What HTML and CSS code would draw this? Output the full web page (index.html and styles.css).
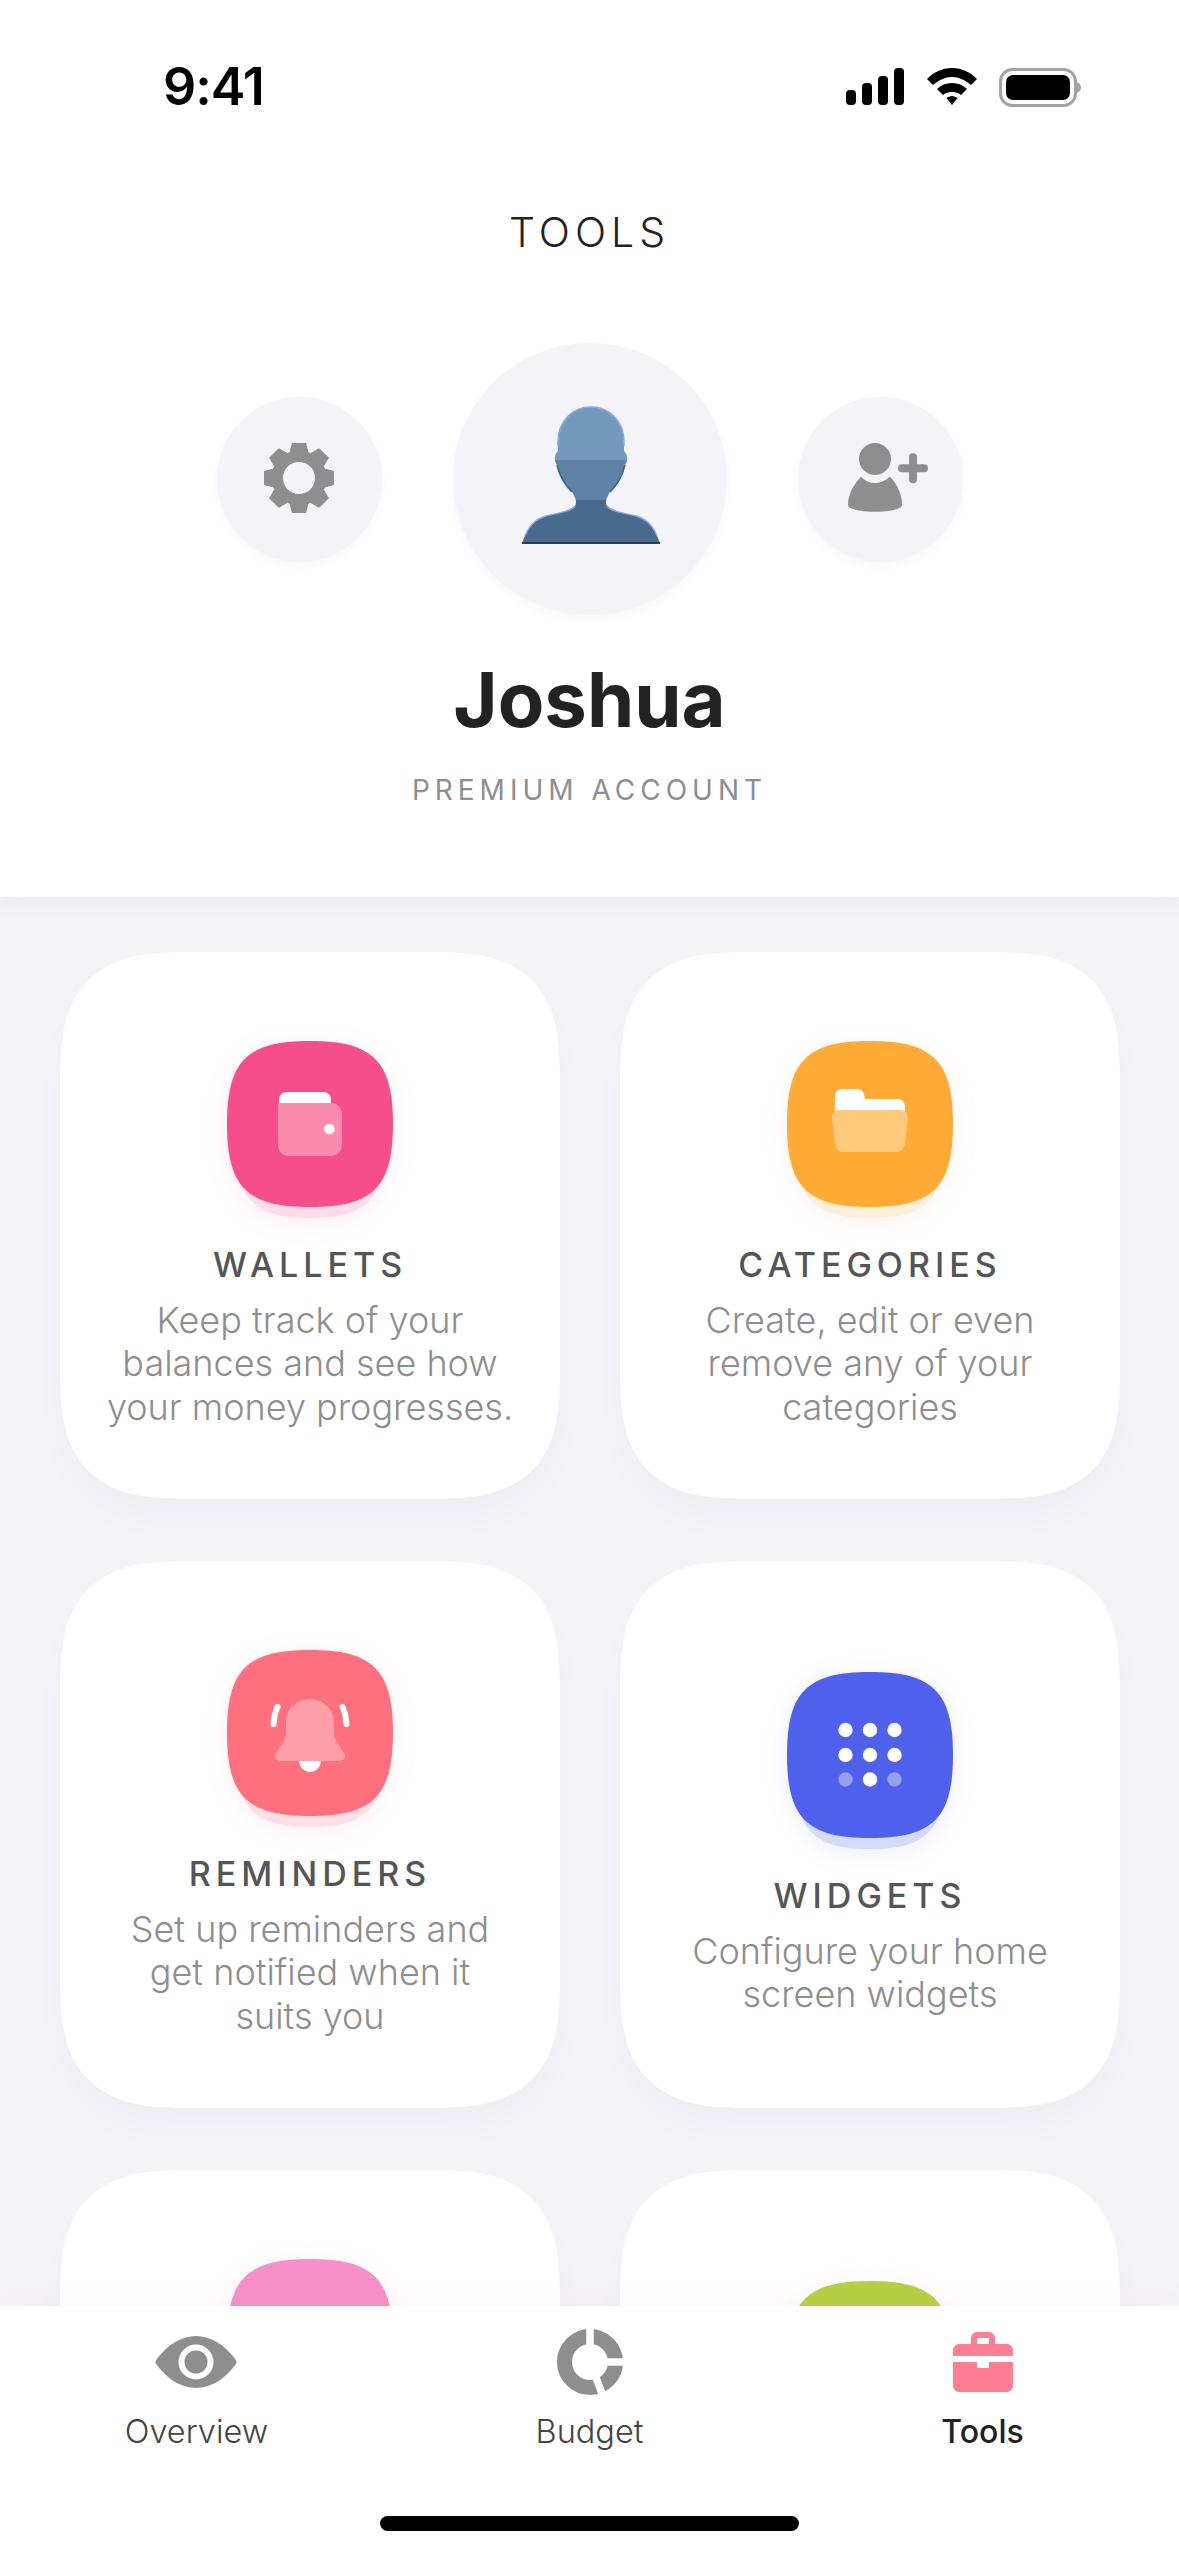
FILE: index.html
```html
<!DOCTYPE html>
<html lang="en">
<head>
	<meta charset="UTF-8">
	<meta name="viewport" content="width=device-width, initial-scale=1.0">
	<title>Tools</title>
	<link rel="stylesheet" href="styles.css">
</head>
<body>
	<svg class="defs" width="0" height="0" aria-hidden="true">
		<defs>
			<path id="sq" d="M83 0C146 0 166 20 166 83C166 146 146 166 83 166C20 166 0 146 0 83C0 20 20 0 83 0Z"/>
			<linearGradient id="bust" gradientUnits="userSpaceOnUse" x1="0" y1="0" x2="0" y2="138">
				<stop offset="0.39" stop-color="#7399bb"/>
				<stop offset="0.39" stop-color="#5e82a6"/>
				<stop offset="0.68" stop-color="#5e82a6"/>
				<stop offset="0.68" stop-color="#486a8d"/>
			</linearGradient>
		</defs>
	</svg>

	<div class="header">
		<div class="status">
			<span class="clock">9:41</span>
			<div class="status-icons">
				<svg class="signal" width="59" height="38" viewBox="0 0 59 38">
					<rect x="1" y="22" width="10" height="15" rx="4"/>
					<rect x="17" y="15" width="10" height="22" rx="4"/>
					<rect x="33" y="8" width="10" height="29" rx="4"/>
					<rect x="49" y="0" width="10" height="37" rx="4"/>
				</svg>
				<svg class="wifi" width="50" height="37" viewBox="0 0 50 37">
					<path d="M0 11C7 4 15 0 25 0C35 0 43 4 50 11L44 17C38 12 32 9 25 9C18 9 12 12 6 17Z"/>
					<path d="M10 21C14 17 19 15 25 15C31 15 36 17 40 21L34 27C32 25 29 24 25 24C21 24 18 25 16 27Z"/>
					<path d="M19.500 30C21 29 23 28 25 28C27 28 29 29 30.500 30L25 37Z"/>
				</svg>
				<svg class="battery" width="82" height="39" viewBox="0 0 82 39">
					<rect x="1.500" y="1.500" width="75" height="36" rx="12" class="battery-rim"/>
					<rect x="7" y="7" width="64" height="25" rx="7"/>
					<path d="M78 14C80.500 15 82 17 82 19.500C82 22 80.500 24 78 25Z" class="battery-nub"/>
				</svg>
			</div>
		</div>

		<div class="title">TOOLS</div>

		<div class="actions">
			<div class="round">
				<svg width="70" height="70" viewBox="-35 -35 70 70" class="grey-icon gear">
					<path fill-rule="evenodd" stroke="#8e8e8e" stroke-width="1" stroke-linejoin="round" d="M-9 -25.500L-6.500 -35H6.500L9 -25.500L11.670 -24.400L20.150 -29.350L29.350 -20.150L24.400 -11.670L25.500 -9L35 -6.500V6.500L25.500 9L24.400 11.670L29.350 20.150L20.150 29.350L11.670 24.400L9 25.500L6.500 35H-6.500L-9 25.500L-11.670 24.400L-20.150 29.350L-29.350 20.150L-24.400 11.670L-25.500 9L-35 6.500V-6.500L-25.500 -9L-24.400 -11.670L-29.350 -20.150L-20.150 -29.350L-11.670 -24.400ZM16.500 0A16.500 16.500 0 1 0 -16.500 0A16.500 16.500 0 1 0 16.500 0Z"/>
				</svg>
			</div>
			<div class="round round-big">
				<svg width="138" height="138" viewBox="0 0 138 138" class="bust">
					<path fill="url(#bust)" d="M69 1C87 1 102 15 102 36V45C106 48 106 55 103 59C100 72 95 79 88 86C84 92 83 97 85 100C89 106 103 107 114 110C127 114 134 124 138 138H0C4 124 11 114 24 110C35 107 49 106 53 100C55 97 54 92 50 86C43 79 38 72 35 59C32 55 32 48 36 45V36C36 15 51 1 69 1Z"/>
					<path class="bust-edge" d="M36 40V36C36 15 51 1 69 1C87 1 102 15 102 36V40"/>
					<path class="bust-edge" d="M85 100C89 106 103 107 114 110C125 113 131 120 135 130"/>
					<path class="bust-edge" d="M53 100C49 106 35 107 24 110C13 113 7 120 3 130"/>
					<path class="bust-neck" d="M103 59C100 72 95 79 88 86M35 59C38 72 43 79 50 86"/>
					<path class="bust-base" d="M0 137H138"/>
				</svg>
			</div>
			<div class="round">
				<svg width="80" height="69" viewBox="0 0 80 69" class="grey-icon add-user">
					<circle cx="27" cy="16" r="16"/>
					<path d="M13 33.700C17 38 22 40 27 40C32 40 37 38 42 33.700C50 42 54 52 54 62C54 66 42 68.700 27 68.700C12 68.700 0 66 0 62C0 52 5 42 13 33.700Z"/>
					<path d="M54 25.300H76M65 14.300V36.300" class="plus"/>
				</svg>
			</div>
		</div>

		<div class="name">Joshua</div>
		<div class="plan">PREMIUM ACCOUNT</div>
	</div>

	<div class="cards">
		<div class="card">
			<svg class="tile tile-pink" viewBox="0 0 166 166">
				<use class="tile-under" href="#sq" transform="translate(7 11) scale(.916 1)"/>
				<use class="tile-top" href="#sq"/>
				<path fill="#fff" d="M52 62V59C52 54 55 51 60 51H96C101 51 104 54 104 59V62Z"/>
				<rect x="51" y="62" width="64" height="53" rx="11" fill="#f98cae"/>
				<path fill="#f98cae" d="M51 62H70V75H51Z"/>
				<circle cx="102.500" cy="88" r="5.300" fill="#fff"/>
			</svg>
			<div class="card-name">WALLETS</div>
			<p class="card-text">Keep track of your<br>balances and see how<br>your money progresses.</p>
		</div>

		<div class="card">
			<svg class="tile tile-orange" viewBox="0 0 166 166">
				<use class="tile-under" href="#sq" transform="translate(7 11) scale(.916 1)"/>
				<use class="tile-top" href="#sq"/>
				<path fill="#fff" d="M48 75V55C48 51 51 48 55 48H70C75 48 77 51 78 58H111C115 58 118 61 118 66V75Z"/>
				<path fill="#ffc97c" d="M53 69H113C118 69 121 72 121 77L118 103C117 108 114 111 110 111H56C52 111 49 108 48 103L45 77C45 72 48 69 53 69Z"/>
			</svg>
			<div class="card-name">CATEGORIES</div>
			<p class="card-text">Create, edit or even<br>remove any of your<br>categories</p>
		</div>

		<div class="card">
			<svg class="tile tile-red" viewBox="0 0 166 166">
				<use class="tile-under" href="#sq" transform="translate(7 11) scale(.916 1)"/>
				<use class="tile-top" href="#sq"/>
				<path fill="#fff" d="M72 110H94C94 117 89 122 83 122C77 122 72 117 72 110Z"/>
				<path fill="#ff9da8" d="M83 49C96 49 107 59 107 72V83C107 90 112 95 117 103C120 107 117 111 111 111H55C49 111 46 107 49 103C54 95 59 90 59 83V72C59 59 70 49 83 49Z"/>
				<path class="bell-tick" d="M50.500 57C48 62 47 68 46.500 74M115.500 57C118 62 119 68 119.500 74"/>
			</svg>
			<div class="card-name">REMINDERS</div>
			<p class="card-text">Set up reminders and<br>get notified when it<br>suits you</p>
		</div>

		<div class="card">
			<svg class="tile tile-blue" viewBox="0 0 166 166">
				<use class="tile-under" href="#sq" transform="translate(7 11) scale(.916 1)"/>
				<use class="tile-top" href="#sq"/>
				<g fill="#fff">
					<circle cx="58.500" cy="58" r="7.200"/><circle cx="83" cy="58" r="7.200"/><circle cx="107.500" cy="58" r="7.200"/>
					<circle cx="58.500" cy="83" r="7.200"/><circle cx="83" cy="83" r="7.200"/><circle cx="107.500" cy="83" r="7.200"/>
					<circle cx="83" cy="107.500" r="7.200"/>
				</g>
				<circle cx="58.500" cy="107.500" r="7.200" fill="#95a1ee"/>
				<circle cx="107.500" cy="107.500" r="7.200" fill="#95a1ee"/>
			</svg>
			<div class="card-name">WIDGETS</div>
			<p class="card-text">Configure your home<br>screen widgets</p>
		</div>

		<div class="card card-cut">
			<svg class="tile tile-rose" viewBox="0 0 166 166">
				<use class="tile-top" href="#sq"/>
			</svg>
		</div>

		<div class="card card-cut card-cut-low">
			<svg class="tile tile-green" viewBox="0 0 166 166">
				<use class="tile-top" href="#sq"/>
			</svg>
		</div>
	</div>

	<div class="tabbar">
		<div class="tabs">
			<div class="tab">
				<div class="tab-icon">
					<svg width="82" height="52" viewBox="0 0 82 52" class="eye">
						<path fill="#8e8e8e" d="M1 24C12 9 26 0 41 0C56 0 70 9 81 24Q82 26 81 28C70 43 56 52 41 52C26 52 12 43 1 28Q0 26 1 24Z"/>
						<circle cx="41" cy="26" r="14.500" fill="#8e8e8e" stroke="#fff" stroke-width="6"/>
					</svg>
				</div>
				<span>Overview</span>
			</div>
			<div class="tab">
				<div class="tab-icon">
					<svg width="66" height="66" viewBox="0 0 66 66">
						<circle cx="33" cy="33" r="25.500" fill="none" stroke="#8e8e8e" stroke-width="15"/>
						<path class="donut-cut" d="M33 33V-2M33 33H68M33 33L45.500 65.700"/>
					</svg>
				</div>
				<span>Budget</span>
			</div>
			<div class="tab tab-active">
				<div class="tab-icon">
					<svg width="60" height="60" viewBox="0 0 60 60">
						<path fill="#ff7e93" fill-rule="evenodd" d="M6 12H18V6A6 6 0 0 1 24 0H36A6 6 0 0 1 42 6V12H54A6 6 0 0 1 60 18V24H0V18A6 6 0 0 1 6 12ZM24 6V12H36V6Z"/>
						<path fill="#ff7e93" d="M0 30H24V36H36V30H60V54A6 6 0 0 1 54 60H6A6 6 0 0 1 0 54Z"/>
					</svg>
				</div>
				<span>Tools</span>
			</div>
		</div>
		<div class="home-bar"></div>
	</div>
</body>
</html>
```

FILE: styles.css
```css
* {
	box-sizing: border-box;
}
html, body {
	margin: 0;
	height: 100%;
}
body {
	width: 1179px;
	height: 2556px;
	overflow: hidden;
	background-color: #f3f3f8;
	font-family: Inter, "Liberation Sans", sans-serif;
}
.defs {
	position: absolute;
}

/* top part */
.header {
	position: relative;
	height: 897px;
	background-color: white;
	box-shadow: 0 4px 24px rgba(40, 40, 70, 0.05);
	text-align: center;
}
.status {
	display: flex;
	justify-content: space-between;
	height: 107px;
	padding: 67px 98px 0 163px;
}
.clock {
	font-size: 52px;
	line-height: 40px;
	font-weight: 600;
	letter-spacing: -1px;
	color: black;
}
.status-icons {
	display: flex;
	align-items: flex-start;
	gap: 22px;
	margin-top: 1px;
}
.signal {
	margin-right: 1px;
}
.battery-rim {
	fill: none;
	stroke: #a3a3a3;
	stroke-width: 3;
}
.battery-nub {
	fill: #a3a3a3;
}
.title {
	margin-top: 105px;
	font-size: 41px;
	line-height: 40px;
	font-weight: 300;
	letter-spacing: 5px;
	color: #222;
}
.actions {
	display: flex;
	justify-content: center;
	align-items: center;
	gap: 71px;
	height: 272px;
	margin-top: 91px;
}
.round {
	display: flex;
	justify-content: center;
	align-items: center;
	width: 165px;
	height: 165px;
	border-radius: 50%;
	background-color: #f3f3f8;
	box-shadow: 0 4px 8px rgba(40, 40, 70, 0.04);
}
.round-big {
	width: 274px;
	height: 272px;
}
.grey-icon {
	fill: #8e8e8e;
}
.gear {
	margin-bottom: 3px;
}
.add-user {
	margin: 0 0 3px 16px;
}
.bust {
	margin: 0 0 8px 3px;
}
.plus {
	fill: none;
	stroke: #8e8e8e;
	stroke-width: 8;
	stroke-linecap: round;
}
.bust-edge {
	fill: none;
	stroke: #8ea5e6;
	stroke-width: 1.5;
}
.bust-neck {
	fill: none;
	stroke: #3f6488;
	stroke-width: 1.5;
}
.bust-base {
	fill: none;
	stroke: #2c3d55;
	stroke-width: 2;
}
.name {
	margin-top: 39px;
	font-size: 76px;
	line-height: 90px;
	font-weight: 700;
	color: #222;
}
.plan {
	margin-top: 26px;
	font-size: 28px;
	line-height: 40px;
	letter-spacing: 5px;
	color: #8e8e8e;
}

/* cards */
.cards {
	display: grid;
	grid-template-columns: 500px 500px;
	grid-auto-rows: 547px;
	column-gap: 60px;
	row-gap: 62px;
	height: 1409px;
	padding: 55px 0 0 60px;
	overflow: hidden;
}
.card {
	display: flex;
	flex-direction: column;
	align-items: center;
	justify-content: center;
	padding-top: 19px;
	background-color: white;
	border-radius: 130px;
	corner-shape: superellipse(1.5);
	box-shadow: 0 22px 32px rgba(40, 40, 70, 0.025);
	text-align: center;
}
.card-cut {
	justify-content: flex-start;
	padding-top: 89px;
}
.card-cut-low {
	padding-top: 111px;
}
.tile {
	flex: none;
	width: 166px;
	height: 166px;
	overflow: visible;
}
.tile-pink {
	filter: drop-shadow(0 4px 12px rgba(245, 80, 130, 0.1));
}
.tile-pink .tile-top {
	fill: #f54e8a;
}
.tile-pink .tile-under {
	fill: #ffdde6;
}
.tile-orange {
	filter: drop-shadow(0 4px 12px rgba(245, 110, 110, 0.09));
}
.tile-orange .tile-top {
	fill: #ffab36;
}
.tile-orange .tile-under {
	fill: #ffeed8;
}
.tile-red {
	filter: drop-shadow(0 4px 12px rgba(255, 100, 110, 0.09));
}
.tile-red .tile-top {
	fill: #ff707e;
}
.tile-red .tile-under {
	fill: #ffdfe6;
}
.tile-blue {
	filter: drop-shadow(0 4px 12px rgba(70, 80, 200, 0.1));
}
.tile-blue .tile-top {
	fill: #4f60ed;
}
.tile-blue .tile-under {
	fill: #d4daf9;
}
.tile-rose {
	filter: drop-shadow(0 0 12px rgba(245, 110, 130, 0.07));
}
.tile-rose .tile-top {
	fill: #f78fcb;
}
.tile-green {
	filter: drop-shadow(0 0 12px rgba(245, 130, 110, 0.07));
}
.tile-green .tile-top {
	fill: #b3d13f;
}
.bell-tick {
	fill: none;
	stroke: white;
	stroke-width: 6;
	stroke-linecap: round;
}
.card-name {
	margin-top: 38px;
	font-size: 34px;
	line-height: 40px;
	font-weight: 500;
	letter-spacing: 5px;
	color: #555;
}
.card-text {
	margin: 14px 0 0;
	font-size: 36px;
	line-height: 43.500px;
	font-weight: 300;
	color: #8e8e8e;
}

/* bottom bar */
.tabbar {
	position: relative;
	height: 250px;
	padding-top: 23px;
	background-color: white;
	box-shadow: 0 -8px 26px rgba(255, 130, 150, 0.05);
}
.tabs {
	display: grid;
	grid-template-columns: repeat(3, 1fr);
}
.tab {
	display: flex;
	flex-direction: column;
	align-items: center;
	font-size: 32.500px;
	line-height: 40px;
	font-weight: 300;
	color: #444;
}
.tab-active {
	font-size: 32px;
	font-weight: 500;
	color: #222;
}
.tab-icon {
	display: flex;
	align-items: center;
	justify-content: center;
	height: 66px;
	margin-bottom: 17px;
}
.eye {
	margin-right: 2px;
}
.donut-cut {
	fill: none;
	stroke: white;
	stroke-width: 7.500;
}
.home-bar {
	width: 419px;
	height: 15px;
	margin: 64px auto 0;
	border-radius: 8px;
	background-color: black;
}
```
